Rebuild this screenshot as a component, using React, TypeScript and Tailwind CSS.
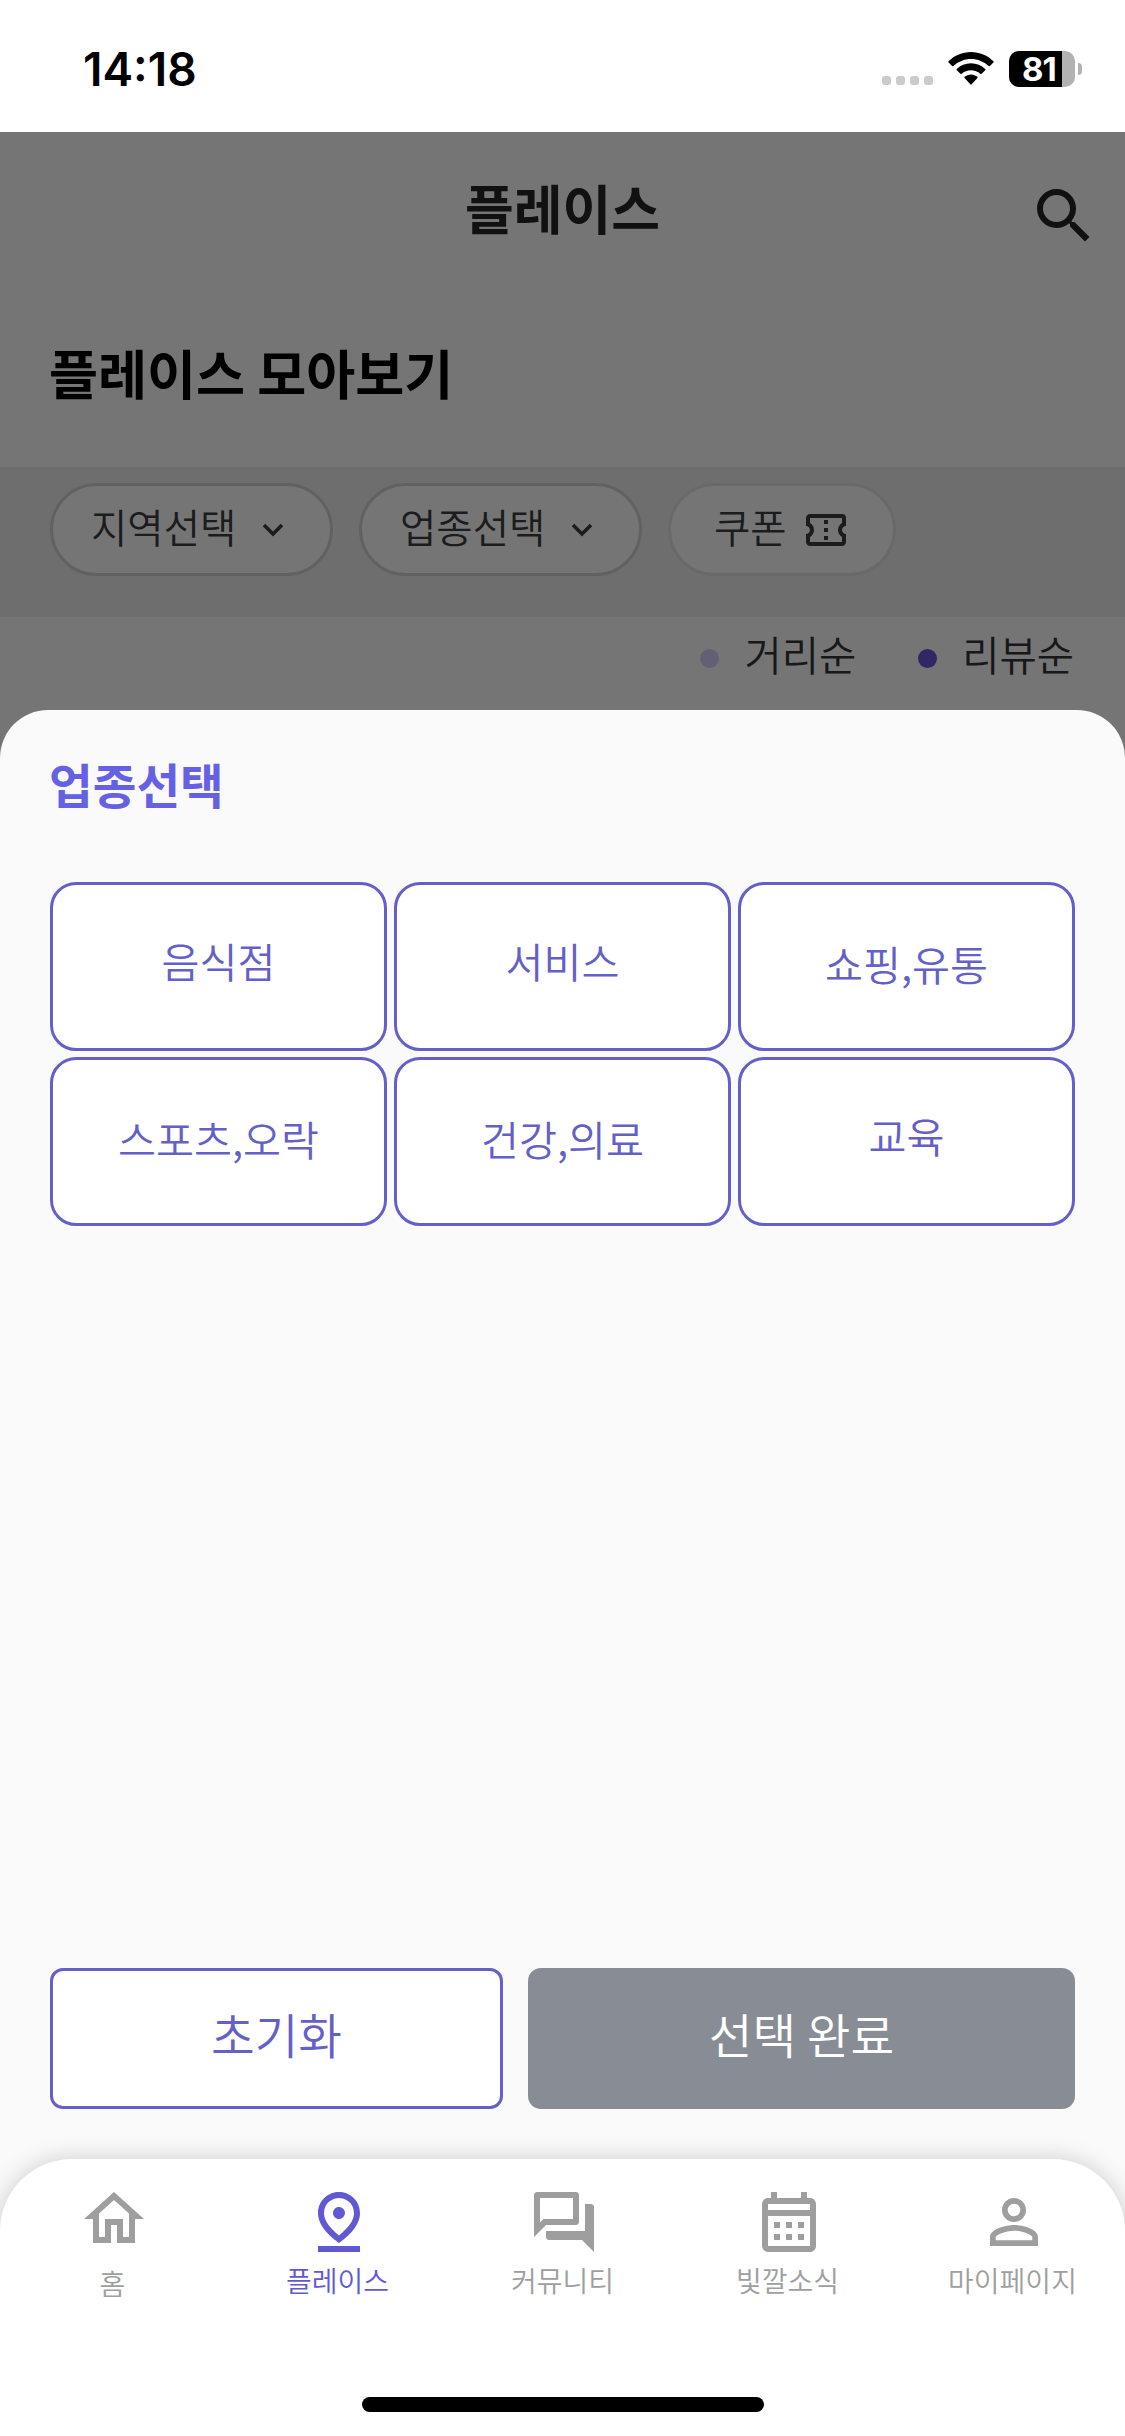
import {
  MdOutlineCalendarMonth,
  MdOutlineConfirmationNumber,
  MdOutlineForum,
  MdOutlineHome,
  MdOutlinePinDrop,
  MdPersonOutline,
  MdSearch,
} from "react-icons/md";

const categories = [
  { name: "음식점", pad: "pb-[11px]" },
  { name: "서비스", pad: "pb-[11px]" },
  { name: "쇼핑,유통", pad: "pb-[5px]" },
  { name: "스포츠,오락", pad: "pb-[5px]" },
  { name: "건강,의료", pad: "pb-[5px]" },
  { name: "교육", pad: "pb-[11px]" },
];

const tabs = [
  { name: "홈", icon: MdOutlineHome, offset: "pt-[24px] gap-[6px]" },
  { name: "플레이스", icon: MdOutlinePinDrop, offset: "pt-[27px]", active: true },
  { name: "커뮤니티", icon: MdOutlineForum, offset: "pt-[27px]" },
  { name: "빛깔소식", icon: MdOutlineCalendarMonth, offset: "pt-[27px]" },
  { name: "마이페이지", icon: MdPersonOutline, offset: "pt-[27px]" },
];

function StatusBar() {
  return (
    <div className="flex h-[132px] items-start justify-between bg-white pl-[83px] pr-[43px] font-['Inter',sans-serif]">
      <span className="mt-[42px] text-[46px] leading-[54px] font-semibold text-black">14:18</span>
      <div className="mt-[51px] flex h-9 items-start">
        <div className="mt-[25px] mr-[15px] flex gap-[5px]">
          {[0, 1, 2, 3].map((dot) => (
            <span key={dot} className="h-[9px] w-[9px] rounded-[3px] bg-[#cbcbcb]" />
          ))}
        </div>
        <svg className="mt-px mr-[15px] h-[33px] w-[46px]" viewBox="0 0 46 33">
          <path d="M23 0C14.300 0 6.400 3.500.600 9.200a.9.9 0 0 0 0 1.300l3.500 3.500c.4.400 1 .4 1.300 0C10 9.700 16.200 7 23 7s13 2.700 17.600 7c.4.400 1 .4 1.300 0l3.500-3.500a.9.9 0 0 0 0-1.300C39.600 3.500 31.700 0 23 0Z" />
          <path d="M23 11.200c-5.500 0-10.500 2.200-14.200 5.700a.9.9 0 0 0 0 1.300l3.600 3.600c.3.300.9.300 1.300 0 2.400-2.300 5.700-3.600 9.300-3.600s6.900 1.300 9.300 3.600c.4.300 1 .3 1.300 0l3.600-3.600a.9.9 0 0 0 0-1.300C33.500 13.400 28.500 11.200 23 11.200Z" />
          <path d="M23 22.400c-2.500 0-4.700.9-6.400 2.400-.4.400-.4.900 0 1.300l5.700 6.100c.4.500 1 .5 1.400 0l5.700-6.100c.4-.4.400-.9 0-1.300-1.700-1.500-3.900-2.400-6.400-2.400Z" />
        </svg>
        <div className="flex items-center gap-[3px]">
          <div className="flex h-9 w-[66px] rounded-[10px] bg-[#b2b2b2]">
            <div className="h-9 w-[53px] rounded-l-[10px] bg-black pl-[13px] text-[33px] leading-9 font-bold tracking-[-1px] text-white">
              81
            </div>
          </div>
          <span className="h-3 w-1 rounded-r-full bg-[#b2b2b2]" />
        </div>
      </div>
    </div>
  );
}

function Chevron() {
  return (
    <svg className="h-[14px] w-[22px]" viewBox="0 0 22 14" fill="none" stroke="#3a3e40" strokeWidth="3.6">
      <path d="M2 2l9 9 9-9" />
    </svg>
  );
}

function PlacePage() {
  return (
    <div className="relative h-[640px] bg-white">
      <header className="relative flex h-[154px] items-center justify-center text-[#262626]">
        <h1 className="pb-[5px] text-[53px] leading-[60px] font-bold">플레이스</h1>
        <MdSearch className="absolute top-[48px] right-[25px] h-[72px] w-[72px]" />
      </header>
      <h2 className="h-[181px] pt-[54px] pl-[49px] text-[53.3px] leading-[64px] font-bold text-black">
        플레이스 모아보기
      </h2>
      <div className="flex h-[150px] items-start gap-[26px] bg-[#f0f0f2] px-[50px] pt-4 text-[39.5px] font-[350] text-[#3a3e40]">
        {["지역선택", "업종선택"].map((label) => (
          <div
            key={label}
            className="flex h-[93px] w-[283px] items-center gap-[26px] rounded-full border-[3px] border-[#d2d5d5] bg-white pl-[38px]"
          >
            <span className="pb-[7px] leading-[50px]">{label}</span>
            <Chevron />
          </div>
        ))}
        <div className="flex h-[93px] w-[228px] items-center gap-[15px] rounded-full border-[3px] border-[#e4e4e4] bg-white pl-[43px]">
          <span className="pb-[7px] leading-[50px]">쿠폰</span>
          <MdOutlineConfirmationNumber className="h-12 w-12" />
        </div>
      </div>
      <div className="flex items-center justify-end gap-[62px] pt-[12px] pr-[51px] text-[40.5px] leading-[50px] font-[350] text-[#333637]">
        <div className="flex items-center gap-[25px]">
          <span className="mt-[9px] h-[19px] w-[19px] rounded-full bg-[#d7d1fb]" />
          거리순
        </div>
        <div className="flex items-center gap-[25px]">
          <span className="mt-[9px] h-[19px] w-[19px] rounded-full bg-[#6757d9]" />
          리뷰순
        </div>
      </div>
      <div className="absolute inset-0 bg-black/54" />
    </div>
  );
}

function CategorySheet() {
  return (
    <section className="relative z-10 -mt-[62px] flex h-[1449px] flex-col rounded-t-[48px] bg-[#fafafa] px-[50px] pt-[42px]">
      <h3 className="-ml-px text-[47.5px] leading-[64px] font-bold text-[#6560e4]">업종선택</h3>
      <div className="mt-[66px] grid grid-cols-3 gap-x-[7px] gap-y-[6px]">
        {categories.map((category) => (
          <button
            key={category.name}
            className={`flex h-[169px] items-center justify-center rounded-[26px] border-[3px] border-[#655fc8] bg-white text-[41.3px] font-[350] text-[#655fc8] ${category.pad}`}
          >
            {category.name}
          </button>
        ))}
      </div>
      <div className="mt-auto mb-[50px] flex h-[141px] gap-[25px] text-[47.5px] font-[350]">
        <button className="w-[453px] rounded-[13px] border-[3px] border-[#655fc8] bg-white pb-[10px] text-[#655fc8]">
          초기화
        </button>
        <button className="flex-1 rounded-[13px] bg-[#888d95] pb-[10px] text-white">선택 완료</button>
      </div>
    </section>
  );
}

function TabBar() {
  return (
    <nav className="relative z-20 flex h-[277px] flex-col rounded-t-[72px] bg-white shadow-[0_0_24px_rgba(0,0,0,0.19)]">
      <div className="grid grid-cols-5">
        {tabs.map((tab) => {
          const Icon = tab.icon;
          return (
            <div
              key={tab.name}
              className={`flex flex-col items-center ${tab.offset} ${
                tab.active ? "text-[#6059d3]" : "text-[#9e9e9e]"
              }`}
            >
              <Icon className="ml-[2px] h-[72px] w-[72px]" />
              <span className="text-[28px] leading-[44px] font-[350]">{tab.name}</span>
            </div>
          );
        })}
      </div>
      <div className="mx-auto mt-auto mb-[24px] h-[15px] w-[402px] rounded-full bg-black" />
    </nav>
  );
}

export default function App() {
  return (
    <div className="h-[2436px] w-[1125px] overflow-hidden bg-[#fafafa] font-['Noto_Sans_CJK_KR',sans-serif]">
      <StatusBar />
      <PlacePage />
      <CategorySheet />
      <TabBar />
    </div>
  );
}
